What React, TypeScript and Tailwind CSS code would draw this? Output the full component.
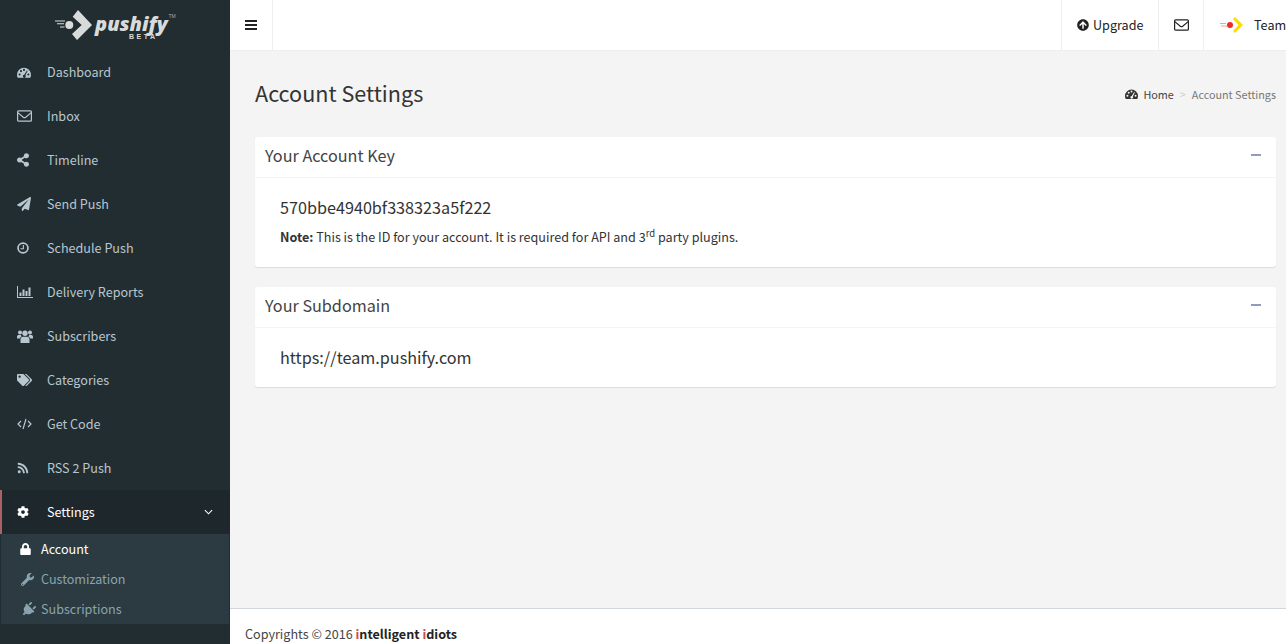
import { FaArrowCircleUp, FaCog, FaLock, FaPaperPlane, FaPlug, FaRss, FaShareAlt, FaTags, FaWrench } from 'react-icons/fa'
import type { ReactNode } from 'react'

const font = "font-['Noto_Sans_CJK_SC','Liberation_Sans',sans-serif]"

function EnvelopeIcon({ className }: { className?: string }) {
  return (
    <svg viewBox="0 0 15 12" className={className} fill="none" stroke="currentColor" strokeWidth="1.2">
      <rect x="0.6" y="0.8" width="13.8" height="10.4" rx="1" />
      <path d="M0.8 2.6 6.3 7.2q1.2 .9 2.4 0L14.2 2.6" />
    </svg>
  )
}

function GaugeIcon({ className }: { className?: string }) {
  return (
    <svg viewBox="0 0 16 12" className={className} fill="currentColor" fillRule="evenodd">
      <path d="M8 .5A8 8 0 0 0 0 8.5c0 1.3.3 2.5.9 3.5h14.2c.6-1 .9-2.2.9-3.5A8 8 0 0 0 8 .5zM3 7a1.2 1.2 0 1 1 0 2.4A1.2 1.2 0 0 1 3 7zM4.6 3.2a1.2 1.2 0 1 1 0 2.4 1.2 1.2 0 0 1 0-2.4zM8 1.8A1.2 1.2 0 1 1 8 4.2 1.2 1.2 0 0 1 8 1.8zM13 7a1.2 1.2 0 1 1 0 2.4A1.2 1.2 0 0 1 13 7zM11.3 3.6l.9.4-2.6 5.2a1.6 1.6 0 1 1-1.3-.6z" />
    </svg>
  )
}

function ClockIcon({ className }: { className?: string }) {
  return (
    <svg viewBox="0 0 14 14" className={className} fill="none" stroke="currentColor">
      <circle cx="7" cy="7" r="5.8" strokeWidth="2" />
      <path d="M7.4 3.4V7.8H4" strokeWidth="1.3" />
    </svg>
  )
}

function ChartIcon({ className }: { className?: string }) {
  return (
    <svg viewBox="0 0 16 12" className={className} fill="currentColor">
      <path d="M0 0h1v11h15v1H0z" />
      <path d="M2.5 6.5h2V10h-2zM5.5 3.5h2V10h-2zM8.5 5h2v5h-2zM11.5 1.5h2V10h-2z" />
    </svg>
  )
}

function UsersIcon({ className }: { className?: string }) {
  return (
    <svg viewBox="0 0 16 13" className={className} fill="currentColor">
      <circle cx="3" cy="2.4" r="2" />
      <circle cx="13" cy="2.4" r="2" />
      <circle cx="8" cy="3.2" r="2.7" />
      <path d="M3.5 13v-3.2C3.5 8 4.6 6.8 6 6.8h4c1.4 0 2.5 1.2 2.5 3V13z" />
      <path d="M0 8.6V6.5C0 5.4.8 4.9 1.8 4.9h2.1c.1.8.4 1.3.8 1.6C3.6 7 2.9 7.7 2.8 8.6zM16 8.6V6.5c0-1.1-.8-1.6-1.800-1.6h-2.100c-.1.8-.4 1.300-.8 1.600 1.100.5 1.800 1.200 1.900 2.100z" />
    </svg>
  )
}

function CodeIcon({ className }: { className?: string }) {
  return (
    <svg viewBox="0 0 15 12" className={className} fill="none" stroke="currentColor" strokeWidth="1.2">
      <path d="M4 3 1 6l3 3M11 3l3 3-3 3M9 1 6 11" />
    </svg>
  )
}

function BarsIcon({ className }: { className?: string }) {
  return (
    <svg viewBox="0 0 12 10" className={className} fill="currentColor">
      <path d="M0 0h12v2H0zM0 4h12v2H0zM0 8h12v2H0z" />
    </svg>
  )
}

function Logo() {
  return (
    <div className="flex h-[50px] items-start pt-[10px] pl-[55px]">
      <svg viewBox="0 0 38 30" className="h-[30px] w-[38px] flex-shrink-0 text-[#d9dbdb]" fill="currentColor">
        <path d="M0 10.5h10v1H0zM2 13.2h7v1H2zM5 16.5h4.500v1H5z" />
        <circle cx="14.3" cy="15" r="4" />
        <path d="M17.7 6.7 23 0l14 15-15 15-5-6 9.700-9z" />
      </svg>
      <div className="relative mt-[4px] ml-[2px]">
        <span className="block text-[20px] leading-[20px] font-extrabold text-[#d9dbdb] italic font-['Open_Sans',sans-serif] whitespace-nowrap">pushify</span>
        <span className="absolute top-[19px] left-[34px] text-[7px] leading-[7px] font-bold tracking-[2.5px] text-[#d9dbdb] font-['Liberation_Sans',sans-serif]">BETA</span>
        <span className="absolute top-[-1px] right-[-8px] text-[5px] leading-[6px] text-[#a5aaab] font-['Liberation_Sans',sans-serif]">TM</span>
      </div>
    </div>
  )
}

const items: { label: string; icon: ReactNode }[] = [
  { label: 'Dashboard', icon: <GaugeIcon className="h-[11px] w-[14px]" /> },
  { label: 'Inbox', icon: <EnvelopeIcon className="h-3 w-[15px]" /> },
  { label: 'Timeline', icon: <FaShareAlt className="h-[14px] w-3" /> },
  { label: 'Send Push', icon: <FaPaperPlane className="h-[14px] w-[14px]" /> },
  { label: 'Schedule Push', icon: <ClockIcon className="h-3 w-3" /> },
  { label: 'Delivery Reports', icon: <ChartIcon className="h-3 w-4" /> },
  { label: 'Subscribers', icon: <UsersIcon className="h-[13px] w-4" /> },
  { label: 'Categories', icon: <FaTags className="h-[14px] w-[15px]" /> },
  { label: 'Get Code', icon: <CodeIcon className="h-3 w-[15px]" /> },
  { label: 'RSS 2 Push', icon: <FaRss className="h-3 w-3" /> },
]

function Sidebar() {
  return (
    <aside className="flex w-[230px] flex-shrink-0 flex-col bg-[#222d32]">
      <Logo />
      <nav>
        {items.map((item) => (
          <div key={item.label} className="flex h-11 items-center pl-[17px] text-[12.6px] text-[#b8c7ce]">
            <span className="flex w-[30px] items-center">{item.icon}</span>
            {item.label}
          </div>
        ))}
        {/* active section */}
        <div className="flex h-11 items-center border-l-2 border-[#a86464] bg-[#1e282c] pr-[17px] pl-[15px] text-[12.6px] text-white">
          <span className="flex w-[30px] items-center">
            <FaCog className="h-3 w-3" />
          </span>
          Settings
          <svg viewBox="0 0 10 6" className="ml-auto h-[6px] w-[9px]" fill="none" stroke="currentColor" strokeWidth="1.2">
            <path d="M1 1l4 4 4-4" />
          </svg>
        </div>
        <div className="mx-[1px] bg-[#2c3b41] text-[12.6px]">
          <div className="flex h-[30px] items-center pl-[19px] text-white">
            <span className="flex w-[21px] items-center">
              <FaLock className="h-3 w-[11px]" />
            </span>
            Account
          </div>
          <div className="flex h-[30px] items-center pl-[20px] text-[#8aa4af]">
            <span className="flex w-[20px] items-center">
              <FaWrench className="h-[13px] w-[13px]" />
            </span>
            Customization
          </div>
          <div className="flex h-[30px] items-center pl-[20px] text-[#8aa4af]">
            <span className="flex w-[20px] items-center">
              <FaPlug className="h-[15px] w-[15px] rotate-45" />
            </span>
            Subscriptions
          </div>
        </div>
      </nav>
    </aside>
  )
}

function Header() {
  return (
    <header className="flex h-[51px] flex-shrink-0 border-b border-[#eeeeee] bg-white text-[12.6px] text-[#222222]">
      <div className="flex w-[43px] items-center justify-center border-r border-[#eeeeee]">
        <BarsIcon className="h-[10px] w-3" />
      </div>
      <div className="ml-auto flex w-[97px] items-center border-l border-[#eeeeee] pl-[15px]">
        <FaArrowCircleUp className="mr-1 h-3 w-3" />
        Upgrade
      </div>
      <div className="flex w-[45px] items-center justify-center border-l border-[#eeeeee]">
        <EnvelopeIcon className="h-3 w-[15px]" />
      </div>
      <div className="flex w-[83px] items-center overflow-hidden border-l border-[#eeeeee] pl-[16px]">
        <svg viewBox="0 0 23 16" className="h-4 w-[23px] flex-shrink-0">
          <path d="M0 6h6v1H0zM1 8.5h6v1H1z" fill="#f4a08f" />
          <circle cx="10" cy="8" r="3" fill="#ee2b24" />
          <path d="M13 2l2-2 8 8-8 8-2-2 5.500-6z" fill="#ffdd00" />
        </svg>
        <span className="ml-[11px]">Team</span>
      </div>
    </header>
  )
}

function Card({ title, children }: { title: string; children: ReactNode }) {
  return (
    <section className="rounded-[3px] bg-white shadow-[0_1px_1px_rgba(0,0,0,0.1)]">
      <div className="flex h-[41px] items-center justify-between border-b border-[#f4f4f4] pr-[15px] pl-[10px]">
        <h3 className="pb-[4px] text-[16.2px] text-[#444444]">{title}</h3>
        <span className="mb-[4px] h-[2px] w-[10px] bg-[#8c9cba]" />
      </div>
      {children}
    </section>
  )
}

export default function App() {
  return (
    <div className={`flex h-[644px] w-[1286px] overflow-hidden bg-[#f4f4f4] ${font}`}>
      <Sidebar />
      <div className="flex min-w-0 flex-1 flex-col">
        <Header />
        <main className="flex-1 pr-[10px] pl-[25px]">
          <div className="flex h-[86px] items-center justify-between">
            <h1 className="pb-[2px] text-[21.6px] text-[#333333]">Account Settings</h1>
            <div className="flex items-center text-[10.8px] text-[#777777]">
              <GaugeIcon className="mr-[5px] h-[10px] w-[13px] text-[#333333]" />
              <span className="text-[#444444]">Home</span>
              <span className="mx-[6px] text-[#cccccc]">&gt;</span>
              Account Settings
            </div>
          </div>
          <div className="flex flex-col gap-5">
            <Card title="Your Account Key">
              <div className="h-[89px] px-[25px] pt-[17px] text-[#333333]">
                <p className="text-[16.2px] leading-[24px]">570bbe4940bf338323a5f222</p>
                <p className="mt-[8px] text-[12.6px] leading-[20px]">
                  <b>Note:</b> This is the ID for your account. It is required for API and 3
                  <sup className="text-[9.5px]">rd</sup> party plugins.
                </p>
              </div>
            </Card>
            <Card title="Your Subdomain">
              <div className="h-[59px] px-[25px] pt-[17px] text-[16.2px] leading-[24px] text-[#333333]">https://team.pushify.com</div>
            </Card>
          </div>
        </main>
        <footer className="h-[36px] flex-shrink-0 border-t border-[#d2d6de] bg-white pt-[15px] pl-[15px] text-[12.6px] leading-[20px] text-[#444444]">
          Copyrights © 2016{' '}
          <b className="text-[#222222]">
            <span className="text-[#c9504d]">i</span>ntelligent <span className="text-[#c9504d]">i</span>diots
          </b>
        </footer>
      </div>
    </div>
  )
}
